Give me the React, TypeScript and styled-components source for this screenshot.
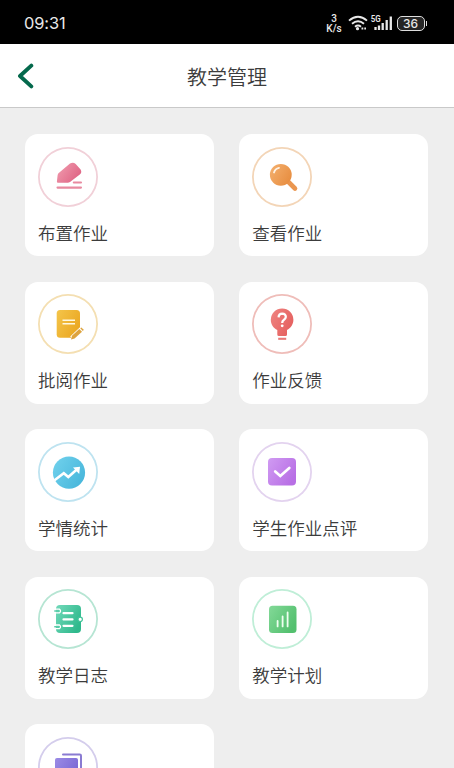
import React from "react";
import styled, { createGlobalStyle } from "styled-components";

const GlobalStyle = createGlobalStyle`
  * { box-sizing: border-box; }
  body { margin: 0; background: #eee; overflow: hidden; }
`;

const Screen = styled.div`
  display: flex;
  flex-direction: column;
  width: 100%;
  height: 768px;
  overflow: hidden;
  background: #eeeeee;
  color: #3c3c3c;
  font-family: "Noto Sans CJK SC", sans-serif;
`;

const StatusBar = styled.div`
  display: flex;
  flex: none;
  align-items: center;
  justify-content: space-between;
  height: 44px;
  padding: 2px 27px 0 24px;
  background: #000;
  color: #e8e8e8;
  font-family: Roboto, sans-serif;
`;

const Clock = styled.span`
  font-family: Inter, sans-serif;
  font-size: 16.4px;
  letter-spacing: -0.1px;
`;

const Indicators = styled.div`
  display: flex;
  align-items: center;
`;

const Speed = styled.div`
  display: flex;
  flex-direction: column;
  align-items: center;
  gap: 1px;
  width: 15px;
  margin: 0 6px 0 0;
  font-family: "Liberation Sans", sans-serif;
  font-weight: 700;
  font-size: 9.5px;
  line-height: 9px;
`;

const SpeedLine = styled.span`
  display: block;
  height: 9px;
  overflow: hidden;
  font-family: Roboto, sans-serif;
  font-weight: 500;
  font-size: 10px;
  line-height: 9px;
`;

const Wifi = styled.svg`
  width: 20px;
  height: 16px;
  margin-right: 3px;
`;

const Signal = styled.svg`
  width: 22px;
  height: 16px;
  margin-right: 4px;
  overflow: visible;
`;

const Battery = styled.div`
  display: flex;
  align-items: center;
  justify-content: center;
  width: 28px;
  height: 15px;
  padding-top: 1px;
  border: 1.5px solid #ddd;
  border-radius: 5px;
  background: #252525;
  font-family: Inter, sans-serif;
  font-size: 12px;
  font-weight: 500;
  line-height: 12px;
`;

const BatteryTip = styled.div`
  width: 1.5px;
  height: 5px;
  margin: 0 0 0 1px;
  background: #ddd;
`;

const NavBar = styled.header`
  display: grid;
  grid-template-columns: 60px 1fr 60px;
  flex: none;
  align-items: center;
  height: 64px;
  background: #fff;
  border-bottom: 1.5px solid #c9c9c9;
`;

const BackButton = styled.button`
  display: flex;
  padding: 1px 0 0 16px;
  border: 0;
  background: none;
`;

const Title = styled.h1`
  margin: 2px 0 0;
  font-size: 20px;
  font-weight: 350;
  line-height: 30px;
  text-align: center;
`;

const Grid = styled.main`
  display: grid;
  grid-template-columns: 1fr 1fr;
  grid-auto-rows: 122px;
  gap: 25.5px 25px;
  padding: 26px 25.6px 0 25px;
`;

const Card = styled.section`
  display: flex;
  flex-direction: column;
  align-items: flex-start;
  padding: 12.5px 13px 0;
  border-radius: 13px;
  background: #fff;
`;

const Badge = styled.div<{ $ring: string }>`
  display: flex;
  flex: none;
  width: 60px;
  height: 60px;
  border-radius: 50%;
  box-shadow: inset 0 0 0 1.8px ${(p) => p.$ring};
`;

const Label = styled.span`
  margin-top: 13px;
  font-size: 17.5px;
  font-weight: 350;
  line-height: 26px;
  white-space: nowrap;
`;

interface Item {
  id: string;
  label: string;
  ring: string;
  from: string;
  to: string;
  draw: (fill: string) => React.ReactNode;
}

const items: Item[] = [
  {
    id: "assign", label: "布置作业", ring: "#f1d0d8", from: "#f2a0b2", to: "#df6585",
    draw: (f) => (
      <>
        <path d="M18.9 34.5 19.6 28.2Q19.8 26.8 21 25.8L32 16.6Q35 14.5 37.7 17L42.6 22.4Q44.3 25.2 41.8 27.6L32 35Q31 35.8 29.7 35.8H20Q18.8 35.8 18.9 34.5Z" fill={f} />
        <path d="M35.8 35.5H43M19.5 40.6H43" stroke="#e88aa0" strokeWidth="2.1" strokeLinecap="round" />
      </>
    ),
  },
  {
    id: "view", label: "查看作业", ring: "#f3d5b7", from: "#f4b170", to: "#e88f42",
    draw: (f) => (
      <>
        <path d="M36 34.5 43 41.5" stroke="#ea9650" strokeWidth="4.6" strokeLinecap="round" />
        <circle cx="28.8" cy="27.8" r="10.9" fill={f} />
        <path d="M22 25.5Q23.2 21.6 27 20.8" stroke="#fff3e5" strokeWidth="1.8" fill="none" strokeLinecap="round" />
      </>
    ),
  },
  {
    id: "review", label: "批阅作业", ring: "#f4dfb2", from: "#f4c54b", to: "#eba822",
    draw: (f) => (
      <>
        <path d="M22 16H38.5Q42 16 42 19.5V34L33 43.7H22Q18.7 43.7 18.7 40.2V19.5Q18.7 16 22 16Z" fill={f} />
        <path d="M24.5 26.2H37M24.5 29.8H37" stroke="#fff8e0" strokeWidth="1.6" />
        <path d="M34.3 44.7 44.3 35.2" stroke="#fff" strokeWidth="6" />
        <path d="M33 45.5 34 41.8 41.3 35 44 37.8 36.6 44.6Z" fill="#dda33e" />
        <path d="M42.2 34.2 43.3 33.4 45.8 35.8 44.8 36.9Z" fill="#dda33e" />
      </>
    ),
  },
  {
    id: "feedback", label: "作业反馈", ring: "#efbdb9", from: "#ef8582", to: "#e5605f",
    draw: (f) => (
      <>
        <path d="M25.3 36C21.5 34 18.8 30.5 18.8 25.7a11.3 11.3 0 0 1 22.6 0C41.4 30.5 38.6 34 35 36V40.5Q35 42 33.5 42H26.8Q25.3 42 25.3 40.5Z" fill={f} />
        <path d="M26.2 44.8H34.2" stroke="#e87a78" strokeWidth="2.1" />
        <path d="M26.6 23.4Q26.7 19.7 30.2 19.7Q33.9 19.8 33.8 23Q33.7 24.7 31.7 26Q30.2 27 30.2 29" stroke="#fff" strokeWidth="2.3" fill="none" />
        <circle cx="30.2" cy="31.8" r="1.4" fill="#fff" />
      </>
    ),
  },
  {
    id: "stats", label: "学情统计", ring: "#bee3f0", from: "#72d2ed", to: "#4ab8dc",
    draw: (f) => (
      <>
        <circle cx="31" cy="30.6" r="16.1" fill={f} />
        <path d="M16.5 38.3 25.8 31.2 30.3 35 38.5 27.8" stroke="#fff" strokeWidth="2.5" fill="none" />
        <path d="M35 25.6 42 24.8 41.2 32Z" fill="#fff" />
      </>
    ),
  },
  {
    id: "comment", label: "学生作业点评", ring: "#e3d3ef", from: "#d09bf2", to: "#b86fe5",
    draw: (f) => (
      <>
        <rect x="16" y="15.9" width="28" height="27.7" rx="4" fill={f} />
        <path d="M23.2 29.4 28.3 34 37.3 26" stroke="#fff" strokeWidth="2.7" fill="none" strokeLinecap="round" />
      </>
    ),
  },
  {
    id: "journal", label: "教学日志", ring: "#b6e5d3", from: "#72d9ba", to: "#2fb98c",
    draw: (f) => (
      <>
        <rect x="18" y="16" width="25" height="28" rx="4" fill={f} />
        <path d="M25.5 24.2H34.5M25.5 30.4H34.5M25.5 36.8H34.5" stroke="#fff" strokeWidth="2.2" strokeLinecap="round" />
        <path d="M15 20.2H21.5Q23.5 22 21.5 23.8H15M15 36H21.5Q23.5 37.8 21.5 39.6H15" stroke="#fff" strokeWidth="1.3" fill="none" />
        <path d="M16.8 22H21M16.8 37.8H21" stroke="#58cca8" strokeWidth="1.5" strokeLinecap="round" />
        <circle cx="42.2" cy="30.3" r="2.2" fill="#fff" stroke="#43c59b" strokeWidth="1.2" />
      </>
    ),
  },
  {
    id: "plan", label: "教学计划", ring: "#bfeed7", from: "#83d998", to: "#53c06e",
    draw: (f) => (
      <>
        <rect x="17" y="16.7" width="27.5" height="27.3" rx="3.5" fill={f} />
        <path d="M25.6 32V37.4M30.6 27.5V37.4M35.6 23.5V37.4" stroke="#effff0" strokeWidth="1.8" strokeLinecap="round" />
      </>
    ),
  },
  {
    id: "books", label: "", ring: "#d4cdec", from: "#9b8be5", to: "#7967d4",
    draw: (f) => (
      <>
        <rect x="17" y="21" width="23" height="24" rx="2" fill={f} />
        <path d="M25 17.6H41.8Q43 17.6 43 18.8V41" stroke="#8a7bd2" strokeWidth="2" fill="none" strokeLinecap="round" />
      </>
    ),
  },
];

function ItemCard({ item }: { item: Item }) {
  return (
    <Card>
      <Badge $ring={item.ring}>
        <svg width="60" height="60" viewBox="0 0 60 60" fill="none">
          <defs>
            <linearGradient id={item.id} x1="0" y1="0" x2="1" y2="0.6">
              <stop stopColor={item.from} />
              <stop offset="1" stopColor={item.to} />
            </linearGradient>
          </defs>
          {item.draw(`url(#${item.id})`)}
        </svg>
      </Badge>
      {item.label && <Label>{item.label}</Label>}
    </Card>
  );
}

export default function App() {
  return (
    <Screen>
      <GlobalStyle />
      <StatusBar>
        <Clock>09:31</Clock>
        <Indicators>
          <Speed>
            <SpeedLine>3</SpeedLine>
            <SpeedLine>K/s</SpeedLine>
          </Speed>
          <Wifi viewBox="0 0 20 16" fill="none" stroke="#e8e8e8" strokeWidth="1.9">
            <path d="M1 5.6Q10-2.2 19 5.6M4 8.8Q10 3.8 16 8.8M7 11.8Q10 9.4 13 11.8" />
            <circle cx="9.5" cy="13.7" r="1.6" fill="#e8e8e8" stroke="none" />
            <path d="M13.5 13.6H15.3M16.3 13.6H18" strokeWidth="2" />
          </Wifi>
          <Signal viewBox="0 0 22 16">
            <text x="-0.3" y="7" fill="#e8e8e8" fontFamily="Roboto" fontSize="8.8" fontWeight="600" textLength="10" lengthAdjust="spacingAndGlyphs">5G</text>
            <path d="M4.5 15V12M8 15V10.5M11.7 15V8M15.7 15V5M19.8 15V1.5" stroke="#e8e8e8" strokeWidth="2.3" />
          </Signal>
          <Battery>36</Battery>
          <BatteryTip />
        </Indicators>
      </StatusBar>
      <NavBar>
        <BackButton aria-label="返回">
          <svg width="18" height="26" viewBox="0 0 18 26" fill="none">
            <path d="M15.3 2.6 4 13 15.3 23.4" stroke="#04694c" strokeWidth="3.9" strokeLinecap="round" strokeLinejoin="round" />
          </svg>
        </BackButton>
        <Title>教学管理</Title>
      </NavBar>
      <Grid>
        {items.map((item) => <ItemCard key={item.id} item={item} />)}
      </Grid>
    </Screen>
  );
}
